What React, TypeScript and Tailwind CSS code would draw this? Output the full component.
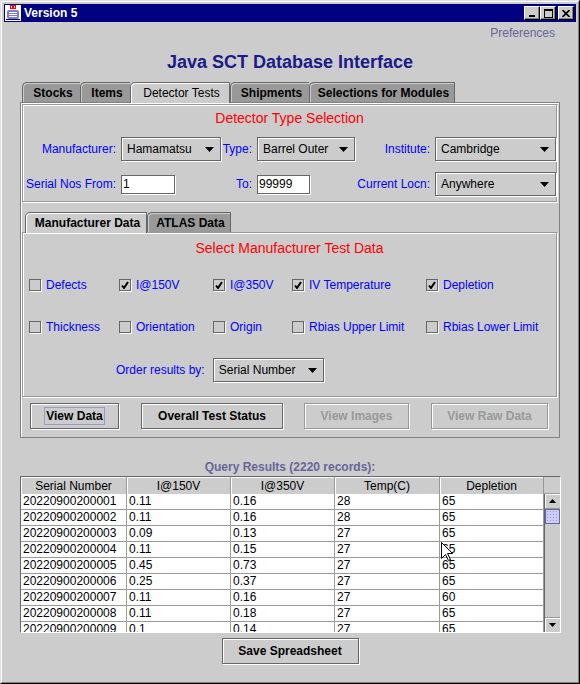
import React from 'react';

type Row = [string, string, string, string, string];

const rows: Row[] = [
  ['20220900200001', '0.11', '0.16', '28', '65'],
  ['20220900200002', '0.11', '0.16', '28', '65'],
  ['20220900200003', '0.09', '0.13', '27', '65'],
  ['20220900200004', '0.11', '0.15', '27', '65'],
  ['20220900200005', '0.45', '0.73', '27', '65'],
  ['20220900200006', '0.25', '0.37', '27', '65'],
  ['20220900200007', '0.11', '0.16', '27', '60'],
  ['20220900200008', '0.11', '0.18', '27', '65'],
  ['20220900200009', '0.1', '0.14', '27', '65'],
];

const headers = ['Serial Number', 'I@150V', 'I@350V', 'Temp(C)', 'Depletion'];

const DownArrow = () => (
  <svg width="9" height="5" viewBox="0 0 9 5">
    <polygon points="0,0 9,0 4.5,5" fill="#000" />
  </svg>
);

const Combo: React.FC<{ value: string; w: string }> = ({ value, w }) => (
  <div
    className={`${w} h-[24px] flex items-center justify-between pl-[5px] pr-[6px] bg-[#cccccc] border border-[#666666] shadow-[inset_1px_1px_0_#fff,1px_1px_0_#fff] text-[12px] text-black`}
  >
    <span>{value}</span>
    <DownArrow />
  </div>
);

const Field: React.FC<{ value: string; w: string }> = ({ value, w }) => (
  <div
    className={`${w} h-[19px] flex items-center pl-[1px] bg-white border border-[#666666] shadow-[1px_1px_0_#fff] text-[12px] text-black`}
  >
    {value}
  </div>
);

const Label: React.FC<{ children: React.ReactNode }> = ({ children }) => (
  <div className="flex items-center justify-end pr-[5px] text-[12px] text-[#0000ff] whitespace-nowrap">{children}</div>
);

const Check: React.FC<{ label: string; checked?: boolean }> = ({ label, checked }) => (
  <div className="flex items-center h-[16px] gap-[5px] whitespace-nowrap">
    <div className="w-[12px] h-[12px] bg-[#cccccc] border border-[#666666] shadow-[1px_1px_0_#fff] flex items-center justify-center">
      {checked && (
        <svg width="8" height="8" viewBox="0 0 8 8">
          <path d="M1 4.5 L3 7 L7 1" stroke="#000" strokeWidth="2" fill="none" />
        </svg>
      )}
    </div>
    <span className="text-[12px] text-[#0000ff]">{label}</span>
  </div>
);

const Tab: React.FC<{ label: string; w: string; selected?: boolean; bold?: boolean }> = ({ label, w, selected, bold }) =>
  selected ? (
    <div
      className={`${w} relative z-10 h-[21px] pb-[1px] flex items-center justify-center pl-[3px] text-[12px] text-black bg-[#cccccc] border-t border-l border-r border-[#666666] rounded-tl-[5px] shadow-[inset_1px_1px_0_#fff] ${bold ? 'font-bold' : ''}`}
    >
      {label}
    </div>
  ) : (
    <div
      className={`${w} h-[20px] flex items-center justify-center pl-[3px] text-[12px] font-bold text-black bg-[#999999] border-t border-l border-[#666666] rounded-tl-[5px] shadow-[inset_1px_1px_0_#cccccc]`}
    >
      {label}
    </div>
  );

const Btn: React.FC<{ label: string; w: string; disabled?: boolean; focused?: boolean; className?: string }> = ({
  label,
  w,
  disabled,
  focused,
  className = '',
}) => (
  <button
    type="button"
    className={`${w} ${className} h-[26px] flex items-center justify-center text-[12px] font-bold border shadow-[inset_1px_1px_0_#fff,1px_1px_0_#fff] ${
      disabled ? 'border-[#999999] text-[#999999]' : 'border-[#666666] text-black'
    }`}
  >
    {focused ? <span className="border border-[#9999cc] px-[1px] leading-[16px]">{label}</span> : label}
  </button>
);

const TitleIcon = () => (
  <svg width="16" height="16" viewBox="0 0 16 16">
    <rect x="0" y="0" width="16" height="16" fill="#fff" />
    <rect x="5" y="0" width="6" height="4" fill="#ff0000" />
    <rect x="6" y="1" width="1" height="2" fill="#fff" />
    <rect x="9" y="1" width="1" height="2" fill="#fff" />
    <rect x="2" y="5" width="12" height="9" rx="2" fill="#8080c0" />
    <rect x="4" y="7" width="8" height="1" fill="#fff" />
    <rect x="4" y="9" width="8" height="1" fill="#fff" />
    <rect x="4" y="11" width="8" height="1" fill="#fff" />
    <rect x="1" y="14" width="14" height="1" fill="#000080" />
  </svg>
);

const WinBtn: React.FC<{ children: React.ReactNode; className?: string }> = ({ children, className = '' }) => (
  <div
    className={`${className} w-[16px] h-[14px] bg-[#cccccc] border border-t-white border-l-white border-r-black border-b-black shadow-[inset_-1px_-1px_0_#808080] flex items-center justify-center`}
  >
    {children}
  </div>
);

export default function App() {
  return (
    <div className="relative w-[580px] h-[684px] bg-[#cccccc] border border-t-[#dfdfdf] border-l-[#dfdfdf] border-r-black border-b-black font-['Liberation_Sans',Arial,sans-serif] overflow-hidden">
      <div className="h-full border border-t-white border-l-white border-r-[#808080] border-b-[#808080] p-[2px] flex flex-col">
        {/* title bar */}
        <div className="h-[18px] shrink-0 bg-[#000080] flex items-center pl-[1px] pr-[2px]">
          <TitleIcon />
          <span className="ml-[3px] text-[12px] font-bold text-white">Version 5</span>
          <div className="ml-auto flex items-center">
            <WinBtn>
              <svg width="8" height="8" viewBox="0 0 8 8">
                <rect x="1" y="6" width="6" height="2" fill="#000" />
              </svg>
            </WinBtn>
            <WinBtn>
              <svg width="9" height="9" viewBox="0 0 9 9">
                <rect x="0.5" y="0.5" width="8" height="8" fill="none" stroke="#000" />
                <rect x="0" y="0" width="9" height="2" fill="#000" />
              </svg>
            </WinBtn>
            <WinBtn className="ml-[2px]">
              <svg width="8" height="7" viewBox="0 0 8 7">
                <path d="M0.5 0 L7.5 7 M7.5 0 L0.5 7" stroke="#000" strokeWidth="1.6" />
              </svg>
            </WinBtn>
          </div>
        </div>

        {/* header */}
        <div className="h-[22px] flex items-center justify-end pr-[21px] text-[12px] text-[#666699]">Preferences</div>
        <div className="mt-[6px] h-[24px] flex items-center justify-center text-[18px] font-bold text-[#1a1a8a]">
          Java SCT Database Interface
        </div>

        {/* outer tabs */}
        <div className="mt-[8px] ml-[18px] h-[20px] flex items-start">
          <Tab label="Stocks" w="w-[58px]" />
          <Tab label="Items" w="w-[50px]" />
          <Tab label="Detector Tests" w="w-[100px]" selected />
          <Tab label="Shipments" w="w-[79px]" />
          <div className="border-r border-[#666666] h-[20px]">
            <Tab label="Selections for Modules" w="w-[145px]" />
          </div>
        </div>

        <div className="ml-[16px] w-[540px] h-[336px] border border-[#808080] shadow-[inset_1px_1px_0_#fff] pt-[1px] pl-[1px] flex flex-col">
          {/* detector type selection */}
          <div className="w-[535px] h-[98px] border border-[#999999] shadow-[inset_1px_1px_0_#fff,1px_1px_0_#fff] pt-[4px] flex flex-col">
            <div className="h-[18px] flex items-center justify-center text-[14px] text-[#ff0000]">Detector Type Selection</div>
            <div className="mt-[10px] grid grid-cols-[98px_100px_36px_98px_80px_121px] grid-rows-[24px_24px] gap-y-[11px]">
              <Label>Manufacturer:</Label>
              <Combo value="Hamamatsu" w="w-[100px]" />
              <Label>Type:</Label>
              <Combo value="Barrel Outer" w="w-[98px]" />
              <Label>Institute:</Label>
              <Combo value="Cambridge" w="w-[121px]" />

              <Label>Serial Nos From:</Label>
              <div className="flex items-center">
                <Field value="1" w="w-[54px]" />
              </div>
              <Label>To:</Label>
              <div className="flex items-center">
                <Field value="99999" w="w-[53px]" />
              </div>
              <Label>Current Locn:</Label>
              <Combo value="Anywhere" w="w-[121px]" />
            </div>
          </div>

          {/* inner tabs */}
          <div className="mt-[10px] ml-[3px] h-[20px] flex items-start">
            <Tab label="Manufacturer Data" w="w-[122px]" selected bold />
            <div className="border-r border-[#666666] h-[20px]">
              <Tab label="ATLAS Data" w="w-[83px]" />
            </div>
          </div>
          <div className="w-[535px] h-[165px] border border-[#999999] shadow-[inset_1px_1px_0_#fff,1px_1px_0_#fff] pt-[7px] flex flex-col">
            <div className="h-[16px] flex items-center justify-center text-[14px] text-[#ff0000]">Select Manufacturer Test Data</div>
            <div className="mt-[21px] pl-[6px] grid grid-cols-[90px_94px_79px_134px_auto] gap-y-[26px]">
              <Check label="Defects" />
              <Check label="I@150V" checked />
              <Check label="I@350V" checked />
              <Check label="IV Temperature" checked />
              <Check label="Depletion" checked />
              <Check label="Thickness" />
              <Check label="Orientation" />
              <Check label="Origin" />
              <Check label="Rbias Upper Limit" />
              <Check label="Rbias Lower Limit" />
            </div>
            <div className="mt-[23px] pl-[93px] flex items-center gap-[8px]">
              <span className="text-[12px] text-[#0000ff]">Order results by:</span>
              <Combo value="Serial Number" w="w-[111px]" />
            </div>
          </div>

          {/* action buttons */}
          <div className="mt-[6px] ml-[8px] flex items-center">
            <Btn label="View Data" w="w-[89px]" focused />
            <Btn label="Overall Test Status" w="w-[142px]" className="ml-[22px]" />
            <Btn label="View Images" w="w-[105px]" className="ml-[21px]" disabled />
            <Btn label="View Raw Data" w="w-[117px]" className="ml-[22px]" disabled />
          </div>
        </div>

        {/* results */}
        <div className="mt-[21px] h-[16px] flex items-center justify-center text-[12px] font-bold text-[#666699]">
          Query Results (2220 records):
        </div>
        <div className="mt-[1px] ml-[16px] w-[541px] h-[157px] border border-t-[#666666] border-l-[#666666] border-r-white border-b-white flex overflow-hidden">
          <div className="w-[523px] flex flex-col">
            <div className="h-[17px] grid grid-cols-[106px_104px_104px_105px_104px] shrink-0">
              {headers.map((h) => (
                <div
                  key={h}
                  className="flex items-center justify-center text-[12px] text-black bg-[#cccccc] border-r border-b border-[#999999] shadow-[inset_1px_1px_0_#fff]"
                >
                  {h}
                </div>
              ))}
            </div>
            {rows.map((r) => (
              <div key={r[0]} className="h-[16px] shrink-0 grid grid-cols-[106px_104px_104px_105px_104px] bg-white">
                {r.map((c, i) => (
                  <div
                    key={i}
                    className="flex items-center pl-[2px] text-[12px] text-black border-r border-b border-[#999999] overflow-hidden leading-[15px]"
                  >
                    {c}
                  </div>
                ))}
              </div>
            ))}
          </div>
          {/* scrollbar */}
          <div className="w-[16px] flex flex-col">
            <div className="h-[17px] shrink-0 bg-[#cccccc] border-b border-[#999999]" />
            <div className="flex-1 bg-[#cccccc] border-l border-[#666666] flex flex-col">
              <div className="h-[15px] shrink-0 flex items-center justify-center border-b border-[#999999] shadow-[inset_1px_1px_0_#fff]">
                <svg width="7" height="4" viewBox="0 0 7 4">
                  <polygon points="3.5,0 7,4 0,4" fill="#000" />
                </svg>
              </div>
              <div className="h-[15px] shrink-0 bg-[#ccccff] border border-[#666699] bg-[radial-gradient(#9999cc_0.8px,transparent_0.8px)] bg-[length:3px_3px]" />
              <div className="flex-1" />
              <div className="h-[15px] shrink-0 flex items-center justify-center border-t border-[#999999] shadow-[inset_1px_1px_0_#fff]">
                <svg width="7" height="4" viewBox="0 0 7 4">
                  <polygon points="0,0 7,0 3.5,4" fill="#000" />
                </svg>
              </div>
            </div>
          </div>
        </div>

        <div className="mt-[5px] flex justify-center">
          <Btn label="Save Spreadsheet" w="w-[137px]" />
        </div>
      </div>

      {/* mouse pointer */}
      <svg className="absolute left-[440px] top-[541px]" width="13" height="20" viewBox="0 0 13 20">
        <path d="M0.5 0.5 L0.5 16.5 L4.5 12.5 L7.5 18.5 L9.5 17.5 L6.5 11.5 L11.5 11.5 Z" fill="#fff" stroke="#000" />
      </svg>
    </div>
  );
}
